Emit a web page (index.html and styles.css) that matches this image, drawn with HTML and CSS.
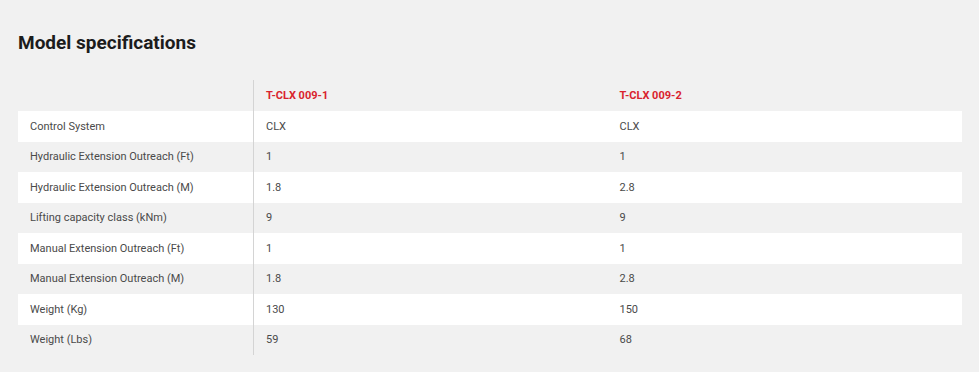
FILE: index.html
```html
<!DOCTYPE html>
<html>
<head>
<meta charset="utf-8">
<link rel="stylesheet" href="styles.css">
</head>
<body>
<section class="specs">
  <h2 class="specs-title">Model specifications</h2>
  <table class="specs-table">
    <thead>
      <tr>
        <th class="label-col"></th>
        <th class="model">T-CLX 009-1</th>
        <th class="model">T-CLX 009-2</th>
      </tr>
    </thead>
    <tbody>
      <tr><td class="label-col">Control System</td><td>CLX</td><td>CLX</td></tr>
      <tr><td class="label-col">Hydraulic Extension Outreach (Ft)</td><td>1</td><td>1</td></tr>
      <tr><td class="label-col">Hydraulic Extension Outreach (M)</td><td>1.8</td><td>2.8</td></tr>
      <tr><td class="label-col">Lifting capacity class (kNm)</td><td>9</td><td>9</td></tr>
      <tr><td class="label-col">Manual Extension Outreach (Ft)</td><td>1</td><td>1</td></tr>
      <tr><td class="label-col">Manual Extension Outreach (M)</td><td>1.8</td><td>2.8</td></tr>
      <tr><td class="label-col">Weight (Kg)</td><td>130</td><td>150</td></tr>
      <tr><td class="label-col">Weight (Lbs)</td><td>59</td><td>68</td></tr>
    </tbody>
  </table>
</section>
</body>
</html>
```
FILE: styles.css
```css
html, body {
  margin: 0;
  padding: 0;
  background: #f1f1f1;
  font-family: Roboto, "Liberation Sans", sans-serif;
}
.specs {
  padding: 31px 17px 0 18px;
}
.specs-title {
  margin: 0;
  font-size: 19px;
  line-height: 24px;
  font-weight: 700;
  color: #1c1c1c;
}
.specs-table {
  margin-top: 25px;
  width: 944px;
  border-collapse: collapse;
  table-layout: fixed;
}
.specs-table th,
.specs-table td {
  padding: 0 12px;
  height: 30.5px;
  text-align: left;
  font-size: 11px;
  color: #4a4a4a;
  font-weight: 400;
}
.specs-table th {
  height: 31px;
}
.specs-table .label-col {
  width: 211px;
  border-right: 1px solid #d4d4d4;
}
.specs-table .model {
  color: #d9232e;
  font-weight: 700;
}
.specs-table tbody tr:nth-child(odd) {
  background: #ffffff;
}
```
